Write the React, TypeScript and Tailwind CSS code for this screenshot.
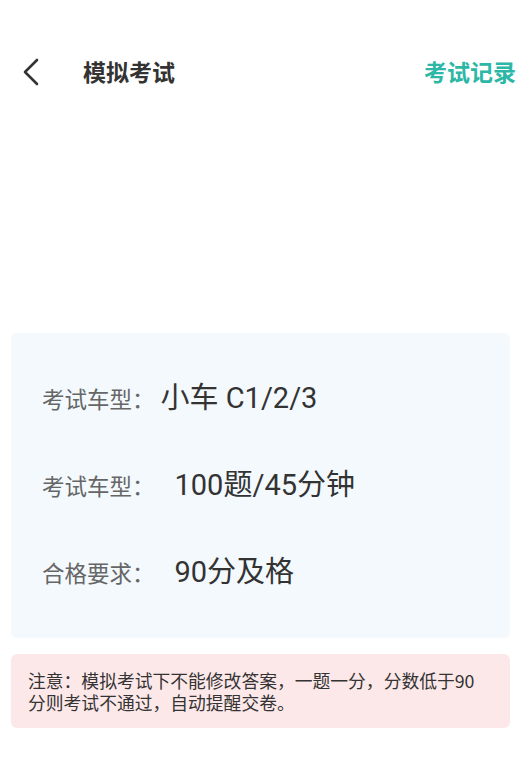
export default function App() {
  const rows = [
    { label: '考试车型：', value: '小车 C1/2/3', gap: 'ml-[6px]' },
    { label: '考试车型：', value: '100题/45分钟', gap: 'ml-[20px]' },
    { label: '合格要求：', value: '90分及格', gap: 'ml-[20px]' },
  ]

  return (
    <div className="w-[521px] h-[779px] bg-white font-['Roboto','Noto_Sans_CJK_SC',sans-serif]">
      {/* Top bar */}
      <div className="pt-[40px] h-[103px] flex items-center pl-[22px] pr-[5px]">
        <svg width="18" height="28" viewBox="0 0 18 28" className="shrink-0">
          <polyline points="15,2 3,14 15,26" fill="none" stroke="#333" strokeWidth="2.6" strokeLinecap="round" strokeLinejoin="round" />
        </svg>
        <div className="ml-[43px] text-[23px] font-bold text-[#333] font-['Noto_Sans_CJK_SC',sans-serif]">模拟考试</div>
        <div className="ml-auto text-[23px] font-bold text-[#2cb7a6] font-['Noto_Sans_CJK_SC',sans-serif]">考试记录</div>
      </div>

      {/* Info card */}
      <div className="mt-[230px] mx-[11px] rounded-[6px] bg-[#f3f9fd] py-[22px] pl-[31px]">
        {rows.map((r, i) => (
          <div key={i} className="h-[87px] flex items-center">
            <span className="text-[22.5px] text-[#666] font-['Noto_Sans_CJK_SC',sans-serif]">{r.label}</span>
            <span className={`${r.gap} text-[29px] text-[#333]`}>{r.value}</span>
          </div>
        ))}
      </div>

      {/* Notice */}
      <div className="mt-[16px] mx-[11px] rounded-[6px] bg-[#fde8e9] pl-[17px] pr-[22px] py-[15px] text-[17.8px] leading-[22px] text-[#333] font-['Noto_Sans_CJK_SC',sans-serif]">
        注意：模拟考试下不能修改答案，一题一分，分数低于90分则考试不通过，自动提醒交卷。
      </div>
    </div>
  )
}
